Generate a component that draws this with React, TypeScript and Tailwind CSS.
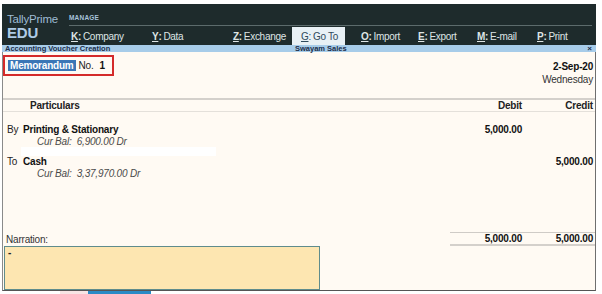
const menu = [
  { k: "K", label: "Company", w: "w-[81px]" },
  { k: "Y", label: "Data", w: "w-[81px]" },
  { k: "Z", label: "Exchange", w: "w-[59px]" },
  { k: "G", label: "Go To", w: "w-[53px]", active: true },
  { k: "O", label: "Import", w: "w-[57px]" },
  { k: "E", label: "Export", w: "w-[59px]" },
  { k: "M", label: "E-mail", w: "w-[60px]" },
  { k: "P", label: "Print", w: "w-[50px]" },
];

function Entry({ dir, name, bal, debit, credit }: { dir: string; name: string; bal: string; debit?: string; credit?: string }) {
  return (
    <div>
      <div className="flex h-[12px] items-center leading-[12px]">
        <span className="w-[20px] shrink-0 pl-[4px] text-[#222]">{dir}</span>
        <span className="font-bold text-[#111]">{name}</span>
        <span className="ml-auto w-[72px] text-right font-bold text-[#111]">{debit}</span>
        <span className="w-[73px] pr-[2px] text-right font-bold text-[#111]">{credit}</span>
      </div>
      <div className="h-[11px] pl-[34px] leading-[11px] italic text-[#4a4a4a]">
        Cur Bal:&nbsp; {bal}
      </div>
    </div>
  );
}

export default function App() {
  return (
    <div className="w-[602px] h-[294px] bg-white overflow-hidden font-['Liberation_Sans',Arial,sans-serif] text-[10px] tracking-[-0.2px]">
      <div className="ml-[2px] mt-[4px] w-[594px]">
        {/* top bar */}
        <div className="flex h-[41px] bg-[#1e2b2c]">
          <div className="w-[67px] pl-[5px] pt-[9px]">
            <div className="text-[11.5px] leading-[12px] text-[#9fbcd4]">TallyPrime</div>
            <div className="text-[15px] font-bold leading-[16px] text-[#aecbe6]">EDU</div>
          </div>
          <div className="flex-1 flex flex-col">
            <div className="pt-[10px] text-[6.5px] font-bold leading-[8px] tracking-[0.2px] text-[#a7c3dc]">MANAGE</div>
            <div className="mt-[3px] mr-[4px] h-px bg-[#5c6b6c]" />
            <div className="flex mt-[1px] flex-1 pl-[2px]">
              {menu.map((m) => (
                <div
                  key={m.k}
                  className={`${m.w} flex items-center text-[10px] tracking-[-0.3px] ${
                    m.active ? "bg-[#e8f0f5] text-[#2f4a5c] pl-[9px] mr-[16px]" : "text-[#dfe5e5]"
                  }`}
                >
                  <span className={m.active ? "underline decoration-[#2f4a5c]" : "font-bold underline"}>{m.k}</span>
                  <span className={m.active ? "" : "font-bold"}>:</span>
                  <span className="ml-[2px]">{m.label}</span>
                </div>
              ))}
            </div>
          </div>
        </div>

        {/* title bar */}
        <div className="flex h-[7px] items-center bg-[#a7cce9] text-[7.5px] font-bold leading-[7px] tracking-normal text-[#1b2d4a]">
          <span className="w-[293px] pl-[3px]">Accounting Voucher Creation</span>
          <span>Swayam Sales</span>
          <span className="ml-auto pr-[4px] text-[8px]">×</span>
        </div>

        {/* body */}
        <div className="flex h-[239px] flex-col border-x border-b border-l-[#8a8a8a] border-r-[#6f6f6f] border-b-[#555] bg-[#fffaf3]">
          <div className="flex h-[46px] items-start">
            <div className="mt-[3px] flex h-[21px] w-[111px] items-center border-2 border-[#d42a2a] pl-[3px]">
              <span className="flex h-[11px] items-center bg-[#3a76b6] px-[2px] text-[10px] font-bold text-white">Memorandum</span>
              <span className="ml-[3px] text-[#222]">No.</span>
              <span className="ml-[6px] font-bold text-[#111]">1</span>
            </div>
            <div className="ml-auto mt-[9px] pr-[2px] text-right leading-[12px]">
              <div className="font-bold text-[#111]">2-Sep-20</div>
              <div className="mt-[1px] text-[#333]">Wednesday</div>
            </div>
          </div>

          <div className="flex h-[14px] items-center border-t-2 border-b border-t-[#d4d0cb] border-b-[#e4e0da] font-bold text-[#222]">
            <span className="pl-[27px]">Particulars</span>
            <span className="ml-auto w-[72px] text-right">Debit</span>
            <span className="w-[73px] pr-[2px] text-right">Credit</span>
          </div>

          <div className="mt-[12px]">
            <Entry dir="By" name="Printing & Stationary" bal="6,900.00 Dr" debit="5,000.00" />
            <div className="ml-[18px] h-[9px] w-[195px] bg-white" />
            <Entry dir="To" name="Cash" bal="3,37,970.00 Dr" credit="5,000.00" />
          </div>

          <div className="flex-1" />

          <div className="flex h-[14px] items-center">
            <span className="pl-[3px] text-[#333]">Narration:</span>
            <div className="ml-auto flex h-[14px] w-[145px] items-center border-t border-b-2 border-t-[#cfcbc6] border-b-[#d4d0cb] font-bold text-[#111]">
              <span className="w-[72px] text-right">5,000.00</span>
              <span className="w-[73px] pr-[2px] text-right">5,000.00</span>
            </div>
          </div>
          <div className="ml-[1px] h-[44px] w-[316px] border border-[#5f8c8c] bg-[#fde6b1] pl-[3px] pt-px font-bold leading-[10px] text-[#222]">
            -
          </div>
        </div>

        {/* bottom strip */}
        <div className="flex h-[3px]">
          <div className="ml-[58px] w-[28px] bg-[#f7e4e4]" />
          <div className="w-[63px] bg-[#2a8ac6]" />
        </div>
      </div>
    </div>
  );
}
